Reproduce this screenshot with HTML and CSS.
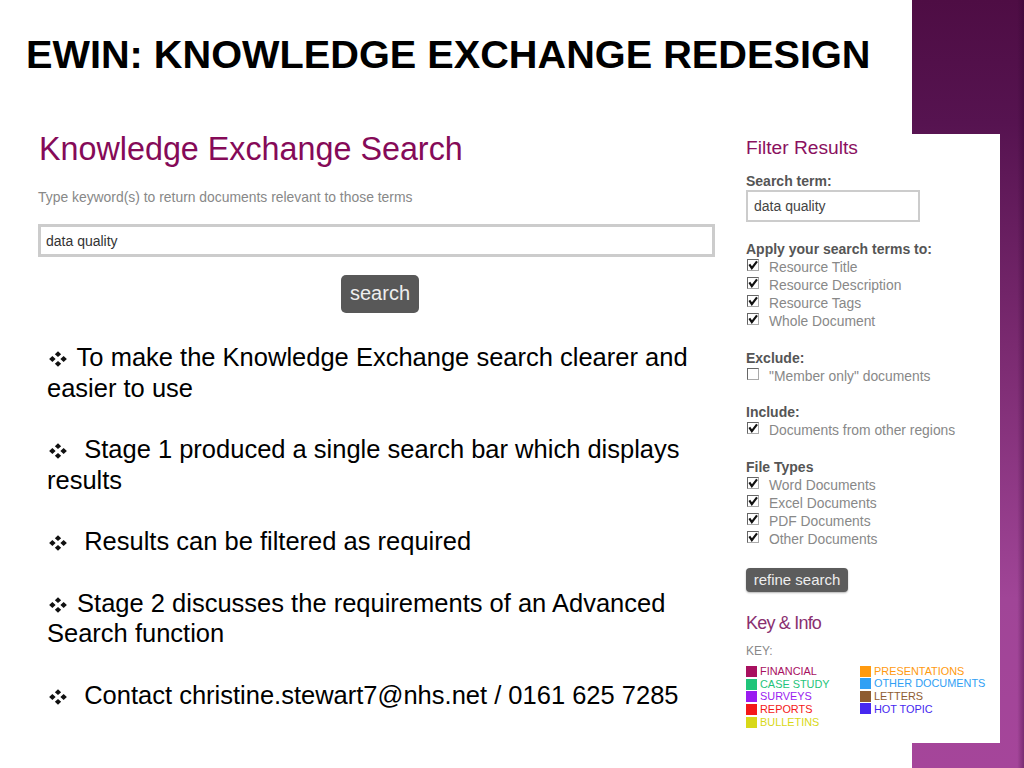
FILE: index.html
```html
<!DOCTYPE html>
<html lang="en">
<head>
<meta charset="utf-8">
<title>EWIN: Knowledge Exchange Redesign</title>
<link rel="stylesheet" href="styles.css">
</head>
<body>
<svg class="defs" width="0" height="0" aria-hidden="true">
  <symbol id="bullet" viewBox="0 0 16 16" preserveAspectRatio="none"><path d="M8 .3 10.8 3.2 8 6.1 5.2 3.2ZM8 9.9 10.8 12.8 8 15.7 5.2 12.8ZM3 5.1 5.9 8 3 10.9.1 8ZM13 5.1 15.9 8 13 10.9 10.1 8Z"/></symbol>
  <symbol id="tick" viewBox="0 0 12 12"><path d="M1.6 5.2 4.6 9.8 10.8 1.6" fill="none" stroke="#111" stroke-width="2.6"/></symbol>
</svg>
<div class="slide">
  <div class="band"></div>
  <h1 class="title">EWIN: KNOWLEDGE EXCHANGE REDESIGN</h1>
  <div class="sheet">
    <main class="main">
      <h2 class="search-heading">Knowledge Exchange Search</h2>
      <p class="hint">Type keyword(s) to return documents relevant to those terms</p>
      <div class="search-box">data quality</div>
      <div class="search-btn">search</div>
      <div class="points">
        <p><svg class="bul"><use href="#bullet"/></svg> To make the Knowledge Exchange search clearer and easier to use</p>
        <p><svg class="bul"><use href="#bullet"/></svg> &nbsp;Stage 1 produced a single search bar which displays results</p>
        <p><svg class="bul"><use href="#bullet"/></svg> &nbsp;Results can be filtered as required</p>
        <p><svg class="bul"><use href="#bullet"/></svg> Stage 2 discusses the requirements of an Advanced Search function</p>
        <p><svg class="bul"><use href="#bullet"/></svg> &nbsp;Contact christine.stewart7@nhs.net / 0161 625 7285</p>
      </div>
    </main>
    <aside class="side">
      <h3 class="side-heading">Filter Results</h3>
      <div class="side-label first">Search term:</div>
      <div class="side-input">data quality</div>

      <div class="side-label apply">Apply your search terms to:</div>
      <div class="opt"><span class="box"><svg class="tick"><use href="#tick"/></svg></span>Resource Title</div>
      <div class="opt"><span class="box"><svg class="tick"><use href="#tick"/></svg></span>Resource Description</div>
      <div class="opt"><span class="box"><svg class="tick"><use href="#tick"/></svg></span>Resource Tags</div>
      <div class="opt"><span class="box"><svg class="tick"><use href="#tick"/></svg></span>Whole Document</div>

      <div class="side-label group">Exclude:</div>
      <div class="opt"><span class="box"></span>"Member only" documents</div>

      <div class="side-label group">Include:</div>
      <div class="opt"><span class="box"><svg class="tick"><use href="#tick"/></svg></span>Documents from other regions</div>

      <div class="side-label group">File Types</div>
      <div class="opt"><span class="box"><svg class="tick"><use href="#tick"/></svg></span>Word Documents</div>
      <div class="opt"><span class="box"><svg class="tick"><use href="#tick"/></svg></span>Excel Documents</div>
      <div class="opt"><span class="box"><svg class="tick"><use href="#tick"/></svg></span>PDF Documents</div>
      <div class="opt"><span class="box"><svg class="tick"><use href="#tick"/></svg></span>Other Documents</div>

      <div class="refine">refine search</div>

      <h3 class="key-heading">Key &amp; Info</h3>
      <div class="key-label">KEY:</div>
      <div class="key">
        <ul class="key-col col-a">
          <li class="k-fin"><i></i>FINANCIAL</li>
          <li class="k-case"><i></i>CASE STUDY</li>
          <li class="k-sur"><i></i>SURVEYS</li>
          <li class="k-rep"><i></i>REPORTS</li>
          <li class="k-bul"><i></i>BULLETINS</li>
        </ul>
        <ul class="key-col col-b">
          <li class="k-pre"><i></i>PRESENTATIONS</li>
          <li class="k-oth"><i></i>OTHER DOCUMENTS</li>
          <li class="k-let"><i></i>LETTERS</li>
          <li class="k-hot"><i></i>HOT TOPIC</li>
        </ul>
      </div>
    </aside>
  </div>
</div>
</body>
</html>
```
FILE: styles.css
```css
* { box-sizing: border-box; }
html, body { margin: 0; padding: 0; background: #fff; }
body { font-family: "Liberation Sans", Arial, sans-serif; overflow: hidden; }
.defs { position: absolute; }

.slide {
  width: 1024px;
  height: 768px;
  display: grid;
  grid-template-columns: 912px 88px 24px;
  grid-template-rows: 134px 609px 25px;
  background: #fff;
  overflow: hidden;
}
.band {
  grid-column: 2 / 4;
  grid-row: 1 / 4;
  background:
    linear-gradient(to right, rgba(40,0,40,0) 94%, rgba(40,0,40,.35) 100%),
    linear-gradient(to bottom, #4e0d44 0%, #561350 16%, #7a2a70 45%, #a04597 78%, #a5459a 100%);
}
.title {
  grid-column: 1;
  grid-row: 1;
  margin: 33px 0 0 26px;
  font-size: 39.7px;
  line-height: 42px;
  font-weight: 700;
  color: #000;
  white-space: nowrap;
}
.sheet {
  grid-column: 1 / 3;
  grid-row: 2;
  background: #fff;
  display: flex;
  z-index: 1;
}

.main { width: 746px; flex: none; padding-left: 38px; }
.search-heading {
  margin: 0;
  padding-left: 1px;
  font-size: 32.3px;
  line-height: 30px;
  font-weight: 400;
  color: #850a58;
}
.hint { margin: 26px 0 0; font-size: 13.9px; line-height: 14px; color: #888; }
.search-box {
  margin-top: 20px;
  width: 677px;
  height: 33px;
  border: 3px solid #ccc;
  padding-left: 5px;
  font-size: 14px;
  line-height: 29px;
  color: #333;
}
.search-btn {
  margin: 18px 0 0 303px;
  width: 78px;
  height: 38px;
  border-radius: 5px;
  background: #585858;
  color: #eee;
  font-size: 20px;
  line-height: 37px;
  text-align: center;
}
.points { margin: 29px 0 0 9px; width: 660px; font-size: 25.5px; line-height: 30.7px; color: #000; }
.points p { margin: 0 0 30.7px; }
.bul { display: inline-block; width: 18px; height: 16px; margin: 0 3px 0 2px; vertical-align: -1px; fill: #111; }

.side { flex: 1; color: #888; }
.side-heading {
  margin: 4px 0 0;
  font-size: 19.2px;
  line-height: 20px;
  font-weight: 400;
  color: #8a1060;
}
.side-label { font-size: 14px; line-height: 18px; font-weight: 700; color: #555; }
.side-label.first { margin-top: 14px; }
.side-label.apply { margin-top: 18px; }
.side-label.group { margin-top: 18.5px; }
.side-input {
  width: 174px;
  height: 32px;
  border: 2px solid #ccc;
  padding-left: 6px;
  font-size: 14px;
  line-height: 28px;
  color: #444;
}
.opt { display: flex; align-items: flex-start; height: 18.1px; font-size: 13.85px; line-height: 18.1px; color: #888; }
.box {
  flex: none;
  width: 12px;
  height: 12px;
  margin: 1px 10px 0 1px;
  border: 1px solid #aaa;
  border-top-color: #666;
  border-left-color: #666;
  background: #fff;
  display: flex;
}
.tick { width: 10px; height: 10px; }
.refine {
  margin-top: 19.4px;
  width: 102px;
  height: 24px;
  border-radius: 4px;
  background: #5c5c5c;
  box-shadow: 0 1px 2px rgba(0,0,0,.3);
  color: #eee;
  font-size: 15px;
  line-height: 24px;
  text-align: center;
}
.key-heading {
  margin: 21px 0 0;
  font-size: 18px;
  line-height: 20px;
  font-weight: 400;
  letter-spacing: -.8px;
  color: #8a3070;
}
.key-label { margin-top: 11px; font-size: 12px; line-height: 14px; color: #888; }
.key { display: flex; margin-top: 7px; }
.key-col { list-style: none; margin: 0; padding: 0; font-size: 10.9px; line-height: 12.8px; }
.col-a { width: 114px; }
.key-col li { display: flex; align-items: center; height: 12.8px; }
.col-b li { height: 12.6px; }
.key-col i { flex: none; width: 11px; height: 11px; margin-right: 3px; background: currentColor; }
.k-fin { color: #a8105f; }
.k-case { color: #1fc47a; }
.k-sur { color: #9a1cf0; }
.k-rep { color: #f41818; }
.k-bul { color: #d8d818; }
.k-pre { color: #ff9a10; }
.k-oth { color: #30a0f4; }
.k-let { color: #8e5c30; }
.k-hot { color: #4628f0; }
```
